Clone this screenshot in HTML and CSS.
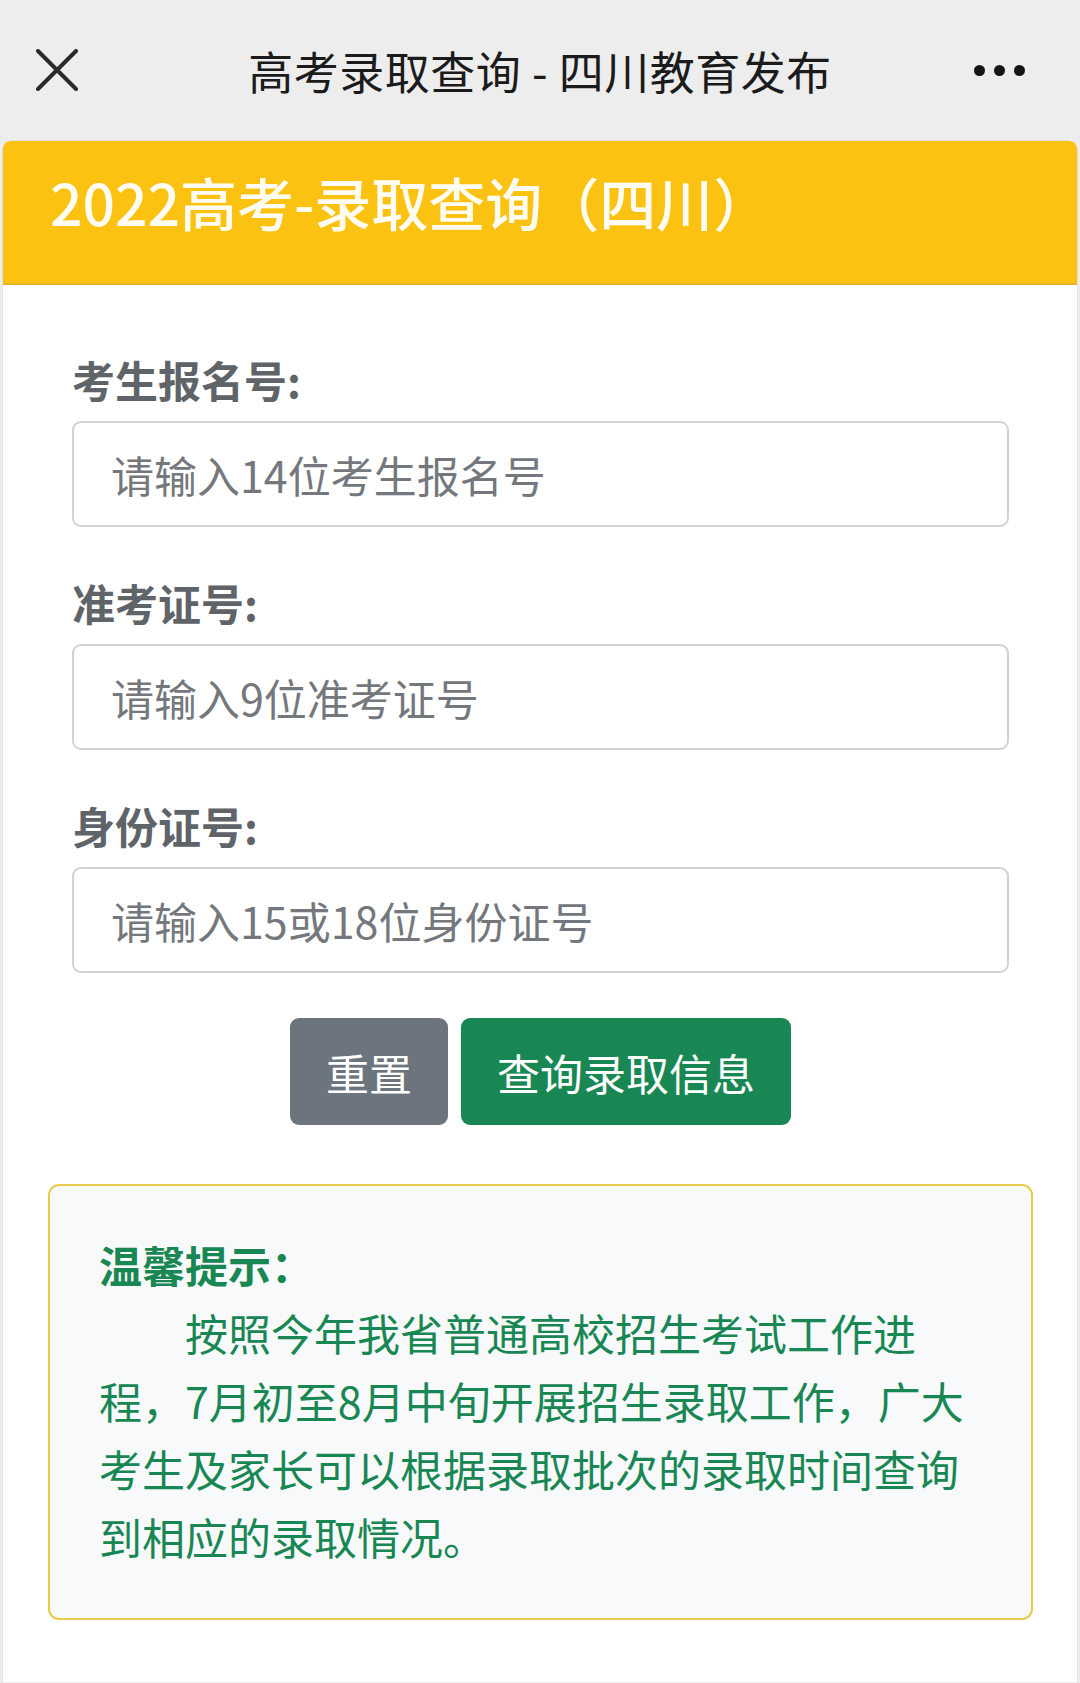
FILE: index.html
```html
<!DOCTYPE html>
<html lang="zh-CN">
<head>
    <meta charset="UTF-8">
    <meta name="viewport" content="width=device-width, initial-scale=1.0">
    <title>高考录取查询 - 四川教育发布</title>
    <link rel="stylesheet" href="styles.css">
</head>
<body>
    <div class="topbar">
        <div class="close">
            <svg width="42" height="42" viewBox="0 0 42 42">
                <path d="M2 2 L40 40 M40 2 L2 40" stroke="#2b2b2b" stroke-width="4" stroke-linecap="round"/>
            </svg>
        </div>
        <div class="bar-title">高考录取查询 - 四川教育发布</div>
        <div class="more">
            <span class="dot"></span><span class="dot"></span><span class="dot"></span>
        </div>
    </div>
    <div class="card">
        <div class="card-header">2022高考-录取查询（四川）</div>
        <div class="form">
            <label class="label" for="bmh">考生报名号:</label>
            <input class="field" type="text" id="bmh" placeholder="请输入14位考生报名号">
            <label class="label" for="zkzh">准考证号:</label>
            <input class="field" type="text" id="zkzh" placeholder="请输入9位准考证号">
            <label class="label" for="sfzh">身份证号:</label>
            <input class="field" type="text" id="sfzh" placeholder="请输入15或18位身份证号">
            <div class="buttons">
                <button class="btn btn-reset" onclick="resetForm()">重置</button>
                <button class="btn btn-query">查询录取信息</button>
            </div>
        </div>
        <div class="notice">
            <div class="notice-title">温馨提示：</div>
            <p class="notice-text">按照今年我省普通高校招生考试工作进程，7月初至8月中旬开展招生录取工作，广大考生及家长可以根据录取批次的录取时间查询到相应的录取情况。</p>
        </div>
    </div>
    <script>
        function resetForm() {
            document.querySelectorAll(".field").forEach(function(f) {
                f.value = "";
            });
        }
    </script>
</body>
</html>
```

FILE: styles.css
```css
body {
    margin: 0;
    padding: 0;
    background-color: #ededed;
    font-family: "Noto Sans CJK SC", "Noto Sans", sans-serif;
}
.topbar {
    display: grid;
    grid-template-columns: 130px 1fr 130px;
    align-items: center;
    height: 140px;
}
.close {
    padding-left: 36px;
    display: flex;
    align-items: center;
}
.bar-title {
    text-align: center;
    font-size: 45px;
    color: #1b1b1b;
    letter-spacing: 0.5px;
}
.more {
    display: flex;
    justify-content: flex-end;
    gap: 9px;
    padding-right: 55px;
}
.dot {
    width: 11px;
    height: 11px;
    border-radius: 50%;
    background-color: #151515;
}
.card {
    margin: 0 2px;
    min-height: 1541px;
    background-color: #fff;
    border: 1px solid #e0e0e0;
    border-bottom: none;
    border-radius: 9px 9px 0 0;
    overflow: hidden;
}
.card-header {
    height: 142px;
    line-height: 120px;
    padding-left: 47px;
    background-color: #fbc211;
    border-bottom: 2px solid #e4b425;
    color: #fffdf3;
    font-size: 57px;
    font-weight: 500;
}
.form {
    display: flex;
    flex-direction: column;
    padding: 19px 68px 0 69px;
}
.label {
    font-size: 43px;
    font-weight: bold;
    line-height: 50px;
    color: #5f6469;
    margin-top: 50px;
    margin-bottom: 17px;
}
.field {
    height: 106px;
    box-sizing: border-box;
    padding: 0 37px;
    border: 2px solid #d2d2d2;
    border-radius: 9px;
    font-family: inherit;
    font-size: 43px;
    color: #333;
}
.field::placeholder {
    color: #74787c;
}
.buttons {
    display: flex;
    justify-content: center;
    gap: 13px;
    margin-top: 45px;
}
.btn {
    height: 107px;
    padding: 0 36px;
    border: none;
    border-radius: 9px;
    color: #fff;
    font-family: inherit;
    font-size: 43px;
    cursor: pointer;
}
.btn-reset {
    background-color: #6c757d;
}
.btn-query {
    background-color: #198754;
}
.notice {
    margin: 59px 44px 0 45px;
    padding: 44px 42px 48px 49px;
    background-color: #f8f9fa;
    border: 2px solid #e9cb4c;
    border-radius: 11px;
    color: #198754;
    font-size: 43px;
    line-height: 68px;
}
.notice-title {
    font-weight: bold;
}
.notice-text {
    margin: 0;
    text-indent: 2em;
}
```
